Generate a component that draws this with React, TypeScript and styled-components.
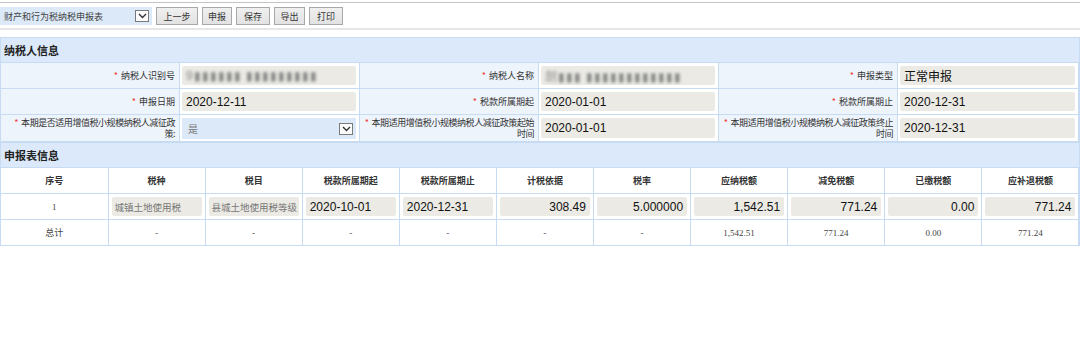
import React from "react";
import styled, { createGlobalStyle } from "styled-components";

const GlobalStyle = createGlobalStyle`
  body {
    margin: 0;
    background: #ffffff;
    font-family: "Liberation Sans", "Noto Sans CJK SC", sans-serif;
    color: #222;
  }
`;

const cjk = `"Noto Sans CJK SC", "Liberation Sans", sans-serif`;

const Page = styled.div`
  width: 1080px;
  height: 361px;
  overflow: hidden;
  border-top: 1px solid #c4c4c4;
  margin-top: 2px;
  box-sizing: border-box;
`;

const Toolbar = styled.div`
  display: flex;
  align-items: center;
  gap: 4px;
  height: 27px;
  padding-top: 1px;
  border-bottom: 2px solid #e6e6e6;
  box-sizing: border-box;
`;

const SelectBox = styled.div<{ w: number; h: number }>`
  width: ${(p) => p.w}px;
  height: ${(p) => p.h}px;
  background: #dce9f8;
  display: flex;
  align-items: center;
  justify-content: space-between;
  padding: 0 3px 0 4px;
  box-sizing: border-box;
  font-family: ${cjk};
  font-size: 9px;
  color: #444;
`;

const Arrow = styled.span`
  width: 14px;
  height: 12px;
  border: 1px solid #7a7a7a;
  background: #fbfbfb;
  display: flex;
  align-items: center;
  justify-content: center;
  box-sizing: border-box;
`;

const ToolButton = styled.button<{ w: number }>`
  width: ${(p) => p.w}px;
  height: 18px;
  padding: 0;
  border: 1px solid #a8a8a8;
  background: linear-gradient(#f0f0f0, #e2e2e2);
  font-family: ${cjk};
  font-size: 9px;
  color: #333;
`;

const Section = styled.div`
  margin-top: 7px;
  border-left: 1px solid #c7dbf2;
  border-right: 1px solid #c7dbf2;
  width: 1080px;
  box-sizing: border-box;
`;

const SectionTitle = styled.div`
  height: 26px;
  background: #dbe9fb;
  border-top: 1px solid #c7dbf2;
  border-bottom: 1px solid #c7dbf2;
  display: flex;
  align-items: center;
  padding-left: 3px;
  font-family: ${cjk};
  font-size: 11px;
  font-weight: bold;
  color: #222;
  box-sizing: border-box;
`;

const InfoGrid = styled.div`
  display: grid;
  grid-template-columns: 179px 180px 179px 180px 179px 181px;
  grid-template-rows: 26px 26px 27px;
`;

const Label = styled.div<{ tight?: boolean }>`
  background: #eef4fc;
  border-right: 1px solid #c7dbf2;
  border-bottom: 1px solid #c7dbf2;
  display: flex;
  align-items: center;
  justify-content: flex-end;
  text-align: right;
  padding: 0 4px 0 2px;
  font-family: ${cjk};
  font-size: 9px;
  line-height: 11px;
  letter-spacing: ${(p) => (p.tight ? "-0.45px" : "0")};
  white-space: nowrap;
  color: #333;
  box-sizing: border-box;
`;

const Star = styled.span`
  color: #e33;
  margin-right: 3px;
`;

const ValueCell = styled.div`
  background: #ffffff;
  border-right: 1px solid #c7dbf2;
  border-bottom: 1px solid #c7dbf2;
  padding: 3px 3px 3px 2px;
  box-sizing: border-box;
  display: flex;
`;

const InputBox = styled.div<{ align?: string; muted?: boolean }>`
  flex: 1;
  background: #ebeae4;
  border-radius: 2px;
  display: flex;
  align-items: center;
  justify-content: ${(p) => (p.align === "right" ? "flex-end" : "flex-start")};
  padding: ${(p) => (p.muted ? "0 1px 0 3px" : "0 4px")};
  font-size: ${(p) => (p.muted ? "9.5px" : "12px")};
  color: ${(p) => (p.muted ? "#777" : "#111")};
  font-family: ${(p) => (p.muted ? cjk : `"Liberation Sans", "Noto Sans CJK SC", sans-serif`)};
  white-space: nowrap;
  overflow: hidden;
`;

const Blurred = styled.span`
  filter: blur(1.6px);
  color: #888;
  letter-spacing: 1px;
`;

const DataTable = styled.table`
  width: 1078px;
  border-collapse: collapse;
  table-layout: fixed;
`;

const Th = styled.th`
  height: 25px;
  border-right: 1px solid #c7dbf2;
  border-bottom: 1px solid #c7dbf2;
  font-family: ${cjk};
  font-size: 9px;
  font-weight: bold;
  color: #333;
  padding: 0;
`;

const Td = styled.td`
  height: 25px;
  border-right: 1px solid #c7dbf2;
  border-bottom: 1px solid #c7dbf2;
  padding: 3px;
  box-sizing: border-box;
`;

const CellInner = styled.div`
  height: 19px;
  display: flex;
`;

const PlainTd = styled.td<{ serif?: boolean }>`
  height: 25px;
  border-right: 1px solid #c7dbf2;
  border-bottom: 1px solid #c7dbf2;
  padding: 0;
  text-align: center;
  font-family: ${(p) => (p.serif ? `"Liberation Serif", serif` : cjk)};
  font-size: 9px;
  color: #444;
`;

const Chevron = () => (
  <svg width="9" height="6" viewBox="0 0 9 6">
    <path d="M1 1 L4.5 4.5 L8 1" fill="none" stroke="#333" strokeWidth="1.4" />
  </svg>
);

type Field = { label: string[]; value: React.ReactNode; select?: boolean };

const infoRows: Field[][] = [
  [
    { label: ["纳税人识别号"], value: <Blurred>9▮▮▮▮▮▮ ▮▮▮▮▮▮▮▮▮</Blurred> },
    { label: ["纳税人名称"], value: <Blurred>剖▮▮▮ ▮▮▮▮▮▮▮▮▮▮▮▮</Blurred> },
    { label: ["申报类型"], value: <span style={{ fontFamily: cjk }}>正常申报</span> },
  ],
  [
    { label: ["申报日期"], value: "2020-12-11" },
    { label: ["税款所属期起"], value: "2020-01-01" },
    { label: ["税款所属期止"], value: "2020-12-31" },
  ],
  [
    { label: ["本期是否适用增值税小规模纳税人减征政", "策:"], value: "是", select: true },
    { label: ["本期适用增值税小规模纳税人减征政策起始", "时间"], value: "2020-01-01" },
    { label: ["本期适用增值税小规模纳税人减征政策终止", "时间"], value: "2020-12-31" },
  ],
];

const columns = [
  "序号",
  "税种",
  "税目",
  "税款所属期起",
  "税款所属期止",
  "计税依据",
  "税率",
  "应纳税额",
  "减免税额",
  "已缴税额",
  "应补退税额",
];

const dataRow: { v: string; align?: string; muted?: boolean }[] = [
  { v: "城镇土地使用税", muted: true },
  { v: "县城土地使用税等级", muted: true },
  { v: "2020-10-01" },
  { v: "2020-12-31" },
  { v: "308.49", align: "right" },
  { v: "5.000000", align: "right" },
  { v: "1,542.51", align: "right" },
  { v: "771.24", align: "right" },
  { v: "0.00", align: "right" },
  { v: "771.24", align: "right" },
];

const totals = ["-", "-", "-", "-", "-", "-", "1,542.51", "771.24", "0.00", "771.24"];

export default function App() {
  return (
    <>
      <GlobalStyle />
      <Page>
        <Toolbar>
          <SelectBox w={152} h={18}>
            <span>财产和行为税纳税申报表</span>
            <Arrow>
              <Chevron />
            </Arrow>
          </SelectBox>
          <ToolButton w={42}>上一步</ToolButton>
          <ToolButton w={30}>申报</ToolButton>
          <ToolButton w={34}>保存</ToolButton>
          <ToolButton w={31}>导出</ToolButton>
          <ToolButton w={34}>打印</ToolButton>
        </Toolbar>
        <Section>
          <SectionTitle>纳税人信息</SectionTitle>
          <InfoGrid>
            {infoRows.map((row, ri) =>
              row.map((f, fi) => (
                <React.Fragment key={`${ri}-${fi}`}>
                  <Label tight={f.label.length > 1}>
                    <span>
                      <Star>*</Star>
                      {f.label.map((line, li) => (
                        <React.Fragment key={li}>
                          {li > 0 && <br />}
                          {line}
                        </React.Fragment>
                      ))}
                    </span>
                  </Label>
                  <ValueCell>
                    {f.select ? (
                      <SelectBox w={175} h={21}>
                        <span style={{ fontSize: 10, color: "#777", paddingLeft: 2 }}>{f.value}</span>
                        <Arrow>
                          <Chevron />
                        </Arrow>
                      </SelectBox>
                    ) : (
                      <InputBox>{f.value}</InputBox>
                    )}
                  </ValueCell>
                </React.Fragment>
              ))
            )}
          </InfoGrid>
          <SectionTitle>申报表信息</SectionTitle>
          <DataTable>
            <colgroup>
              <col style={{ width: 107 }} />
              {columns.slice(1).map((c) => (
                <col key={c} style={{ width: 97.1 }} />
              ))}
            </colgroup>
            <thead>
              <tr>
                {columns.map((c) => (
                  <Th key={c}>{c}</Th>
                ))}
              </tr>
            </thead>
            <tbody>
              <tr>
                <PlainTd serif>1</PlainTd>
                {dataRow.map((d, i) => (
                  <Td key={i}>
                    <CellInner>
                      <InputBox align={d.align} muted={d.muted}>
                        {d.v}
                      </InputBox>
                    </CellInner>
                  </Td>
                ))}
              </tr>
              <tr>
                <PlainTd>总计</PlainTd>
                {totals.map((t, i) => (
                  <PlainTd key={i} serif={t !== "-"}>
                    {t}
                  </PlainTd>
                ))}
              </tr>
            </tbody>
          </DataTable>
        </Section>
      </Page>
    </>
  );
}
